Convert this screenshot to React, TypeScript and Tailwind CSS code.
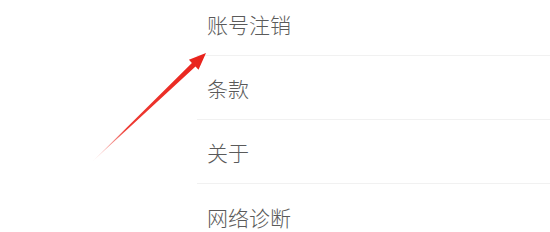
import React from 'react';

const items = ['账号注销', '条款', '关于', '网络诊断'];

function Arrow() {
    return (
        <svg className="absolute left-0 top-0 pointer-events-none" width="550" height="232" viewBox="0 0 550 232">
            <defs>
                <linearGradient id="arrowFade" x1="93" y1="161" x2="206" y2="53" gradientUnits="userSpaceOnUse">
                    <stop offset="0" stopColor="#f08a86" stopOpacity="0.3" />
                    <stop offset="0.3" stopColor="#ee3b33" />
                    <stop offset="1" stopColor="#e8221b" />
                </linearGradient>
            </defs>
            <polygon
                points="93,161 195.5,66.6 198.5,69.8 206,53 188.9,59.7 191.9,62.9"
                fill="url(#arrowFade)"
            />
        </svg>
    );
}

export default function App() {
    return (
        <div className="relative w-[550px] h-[232px] overflow-hidden bg-white">
            <ul className="-mt-2 ml-[197px] flex flex-col">
                {items.map((label, i) => (
                    <li
                        key={label}
                        className={`h-16 flex items-center pt-0.5 pl-[10px] ${i < items.length - 1 ? 'border-b border-[#f1f1f1]' : ''}`}
                    >
                        <span className="text-[21px] leading-none font-light text-[#5a5a5a] font-['Noto_Sans_CJK_SC',sans-serif]">
                            {label}
                        </span>
                    </li>
                ))}
            </ul>
            <Arrow />
        </div>
    );
}
